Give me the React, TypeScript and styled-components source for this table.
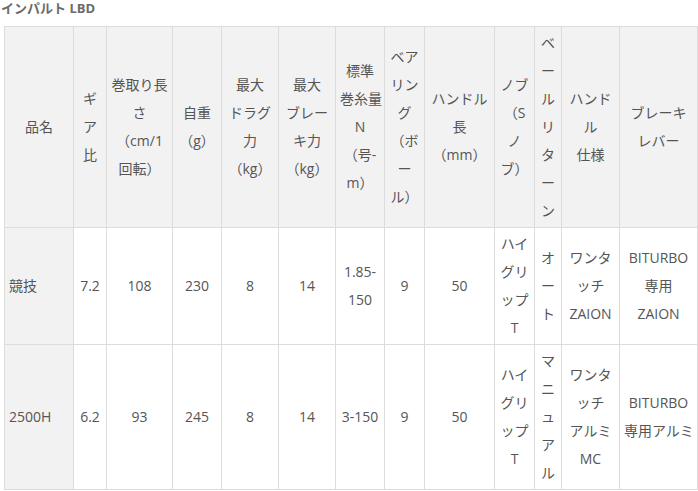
import React from "react";
import styled, { createGlobalStyle } from "styled-components";

const Global = createGlobalStyle`
  html, body { margin: 0; padding: 0; background: #fff; }
  body { font-family: "Open Sans", "Noto Sans CJK JP", sans-serif; }
`;

const Page = styled.div`
  display: flex;
  flex-direction: column;
  align-items: flex-start;
`;

const Title = styled.h3`
  margin: 0 0 10px 1px;
  font-size: 13px;
  line-height: 16px;
  font-weight: 700;
  color: #6a6a6a;
`;

const Table = styled.table`
  margin-left: 4px;
  width: 693px;
  table-layout: fixed;
  border-collapse: collapse;
  font-size: 14px;
  line-height: 28px;
  color: #555;
`;

const Cell = styled.td<{ $head?: boolean; $left?: boolean; $shade?: boolean }>`
  border: 1px solid #dcdcdc;
  padding: 2px 4px;
  text-align: ${(p) => (p.$left ? "left" : "center")};
  vertical-align: middle;
  white-space: nowrap;
  font-weight: 400;
  background: ${(p) => (p.$head || p.$shade ? "#f2f2f2" : "#fff")};
`;

const widths = [69, 33, 66, 49, 57, 57, 49, 40, 70, 40, 27, 58, 78];

const head: string[][] = [
  ["品名"],
  ["ギ", "ア", "比"],
  ["巻取り長", "さ", "（cm/1", "回転）"],
  ["自重", "（g）"],
  ["最大", "ドラグ", "力", "（kg）"],
  ["最大", "ブレー", "キ力", "（kg）"],
  ["標準", "巻糸量", "N", "（号-", "m）"],
  ["ベア", "リン", "グ", "（ボ", "ー", "ル）"],
  ["ハンドル", "長", "（mm）"],
  ["ノブ", "（S", "ノ", "ブ）"],
  ["ベ", "ー", "ル", "リ", "タ", "ー", "ン"],
  ["ハンド", "ル", "仕様"],
  ["ブレーキ", "レバー"],
];

const rows: string[][][] = [
  [
    ["競技"], ["7.2"], ["108"], ["230"], ["8"], ["14"], ["1.85-", "150"], ["9"], ["50"],
    ["ハイ", "グリ", "ップ", "T"], ["オ", "ー", "ト"], ["ワンタ", "ッチ", "ZAION"], ["BITURBO", "専用", "ZAION"],
  ],
  [
    ["2500H"], ["6.2"], ["93"], ["245"], ["8"], ["14"], ["3-150"], ["9"], ["50"],
    ["ハイ", "グリ", "ップ", "T"], ["マ", "ニ", "ュ", "ア", "ル"], ["ワンタ", "ッチ", "アルミ", "MC"], ["BITURBO", "専用アルミ"],
  ],
];

const Lines = ({ lines }: { lines: string[] }) => (
  <>
    {lines.map((l, i) => (
      <React.Fragment key={i}>
        {i > 0 && <br />}
        {l}
      </React.Fragment>
    ))}
  </>
);

export default function App() {
  return (
    <Page>
      <Global />
      <Title>インパルト LBD</Title>
      <Table>
        <colgroup>
          {widths.map((w, i) => (
            <col key={i} style={{ width: w }} />
          ))}
        </colgroup>
        <thead>
          <tr>
            {head.map((h, i) => (
              <Cell as="th" key={i} $head>
                <Lines lines={h} />
              </Cell>
            ))}
          </tr>
        </thead>
        <tbody>
          {rows.map((r, ri) => (
            <tr key={ri}>
              {r.map((c, ci) => (
                <Cell key={ci} $left={ci === 0} $shade={ci === 0}>
                  <Lines lines={c} />
                </Cell>
              ))}
            </tr>
          ))}
        </tbody>
      </Table>
    </Page>
  );
}
